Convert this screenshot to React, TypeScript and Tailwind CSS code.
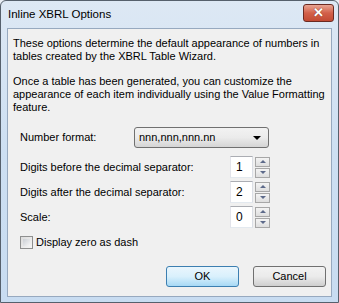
import React from 'react';

const font = { fontFamily: '"Liberation Sans", Arial, sans-serif' };

function Spinner({ value }: { value: string }) {
  return (
    <div className="flex items-center gap-[2px]">
      <div className="w-[23px] h-[22px] bg-white border border-t-[#abadb3] border-l-[#e2e3ea] border-r-[#dbdfe6] border-b-[#e3e9ef] flex items-center pl-[5px] text-[12px] text-black">
        {value}
      </div>
      <div className="flex flex-col gap-[1px]">
        <div className="w-[15px] h-[10px] border border-[#a7a7a7] bg-gradient-to-b from-[#f4f4f4] to-[#dedede] flex items-center justify-center">
          <div className="w-0 h-0 border-l-[3px] border-r-[3px] border-b-[3px] border-l-transparent border-r-transparent border-b-[#5d6a8a]" />
        </div>
        <div className="w-[15px] h-[10px] border border-[#a7a7a7] bg-gradient-to-b from-[#f4f4f4] to-[#dedede] flex items-center justify-center">
          <div className="w-0 h-0 border-l-[3px] border-r-[3px] border-t-[3px] border-l-transparent border-r-transparent border-t-[#5d6a8a]" />
        </div>
      </div>
    </div>
  );
}

export default function App() {
  return (
    <div style={font} className="w-[339px] h-[303px] overflow-hidden bg-[#e9eef5]">
      <div className="w-[339px] h-[303px] flex flex-col border border-[#56606c] rounded-t-[6px] bg-gradient-to-b from-[#dde8f4] via-[#cddff2] to-[#c8dcf1]">
        {/* title bar */}
        <div className="h-[27px] shrink-0 flex items-center justify-between pl-[7px] pr-[4px]">
          <span className="text-[11.5px] text-black">Inline XBRL Options</span>
          <div className="w-[31px] h-[18px] -mt-[4px] rounded-[3px] border border-[#6b2a22] bg-gradient-to-b from-[#e8a493] via-[#d2604a] to-[#c24a33] flex items-center justify-center">
            <span className="text-white font-bold text-[13px] leading-none" style={{ textShadow: '0 0 1px #5a1a10' }}>✕</span>
          </div>
        </div>

        {/* content */}
        <div className="mx-[6px] h-[269px] shrink-0 bg-[#f0f0f0] border border-[#97a9bf] text-[11px] text-black whitespace-nowrap">
          <div className="pl-[5px] pt-[8px] leading-[13px]">
            <p>These options determine the default appearance of numbers in<br />tables created by the XBRL Table Wizard.</p>
            <p className="mt-[12px]">
              Once a table has been generated, you can customize the<br />appearance of each item individually using the Value Formatting<br />feature.
            </p>
          </div>

          <div className="pl-[12px] mt-[13px] flex flex-col">
            <div className="flex items-center h-[21px]">
              <span className="w-[114px]">Number format:</span>
              <div className="w-[135px] h-[21px] rounded-[3px] border border-[#707070] bg-gradient-to-b from-[#f2f2f2] via-[#ebebeb] to-[#d5d5d5] flex items-center justify-between pl-[4px] pr-[7px]">
                <span>nnn,nnn,nnn.nn</span>
                <div className="w-0 h-0 border-l-[4px] border-r-[4px] border-t-[4px] border-l-transparent border-r-transparent border-t-black" />
              </div>
            </div>

            <div className="flex items-center mt-[8px] h-[22px]">
              <span className="w-[210px]">Digits before the decimal separator:</span>
              <Spinner value="1" />
            </div>
            <div className="flex items-center mt-[3px] h-[22px]">
              <span className="w-[210px]">Digits after the decimal separator:</span>
              <Spinner value="2" />
            </div>
            <div className="flex items-center mt-[3px] h-[22px]">
              <span className="w-[210px]">Scale:</span>
              <Spinner value="0" />
            </div>

            <div className="flex items-center mt-[8px] h-[13px] gap-[3px]">
              <div className="w-[13px] h-[13px] border border-[#8e8f8f] bg-gradient-to-br from-[#dcdcdc] to-[#f6f6f6] p-[2px]">
                <div className="w-full h-full bg-gradient-to-br from-[#cbcfd5] to-[#f6f6f6]" />
              </div>
              <span>Display zero as dash</span>
            </div>
          </div>

          <div className="flex justify-end gap-[14px] pr-[5px] mt-[17px]">
            <button className="w-[73px] h-[21px] rounded-[3px] border border-[#3c7fb1] bg-gradient-to-b from-[#eaf6fd] via-[#d9f0fc] to-[#a7d9f5] text-[11px] text-black">
              OK
            </button>
            <button className="w-[73px] h-[21px] rounded-[3px] border border-[#707070] bg-gradient-to-b from-[#f2f2f2] via-[#ebebeb] to-[#cfcfcf] text-[11px] text-black">
              Cancel
            </button>
          </div>
        </div>
      </div>
    </div>
  );
}
